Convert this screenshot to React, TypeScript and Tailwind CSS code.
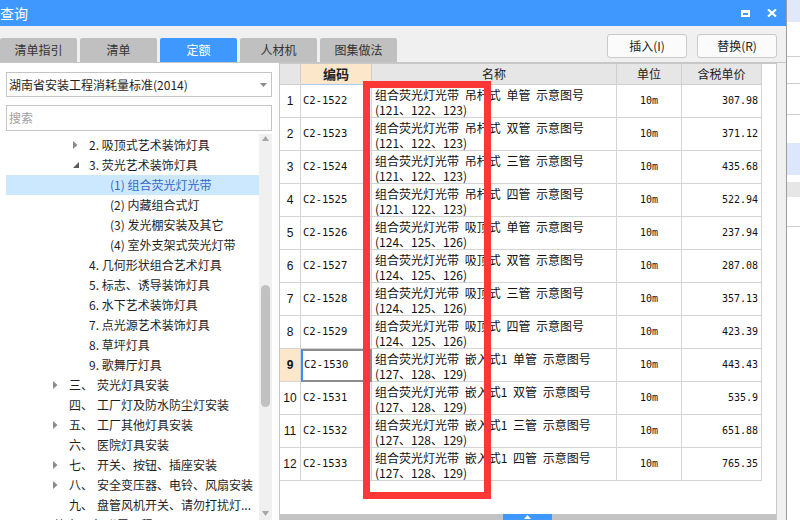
import React from 'react';

const cjk = "font-['Noto_Sans_CJK_SC',sans-serif]";
const mono = "font-['DejaVu_Sans_Mono','Noto_Sans_CJK_SC',monospace]";

type TreeRow = {
  level: 0 | 1 | 2 | 3;
  arrow?: 'c' | 'e';
  num?: string;
  text: string;
  selected?: boolean;
};

const tree: TreeRow[] = [
  { level: 2, arrow: 'c', text: '2. 吸顶式艺术装饰灯具' },
  { level: 2, arrow: 'e', text: '3. 荧光艺术装饰灯具' },
  { level: 3, text: '(1) 组合荧光灯光带', selected: true },
  { level: 3, text: '(2) 内藏组合式灯' },
  { level: 3, text: '(3) 发光棚安装及其它' },
  { level: 3, text: '(4) 室外支架式荧光灯带' },
  { level: 2, text: '4. 几何形状组合艺术灯具' },
  { level: 2, text: '5. 标志、诱导装饰灯具' },
  { level: 2, text: '6. 水下艺术装饰灯具' },
  { level: 2, text: '7. 点光源艺术装饰灯具' },
  { level: 2, text: '8. 草坪灯具' },
  { level: 2, text: '9. 歌舞厅灯具' },
  { level: 1, arrow: 'c', num: '三、', text: '荧光灯具安装' },
  { level: 1, num: '四、', text: '工厂灯及防水防尘灯安装' },
  { level: 1, arrow: 'c', num: '五、', text: '工厂其他灯具安装' },
  { level: 1, num: '六、', text: '医院灯具安装' },
  { level: 1, arrow: 'c', num: '七、', text: '开关、按钮、插座安装' },
  { level: 1, arrow: 'c', num: '八、', text: '安全变压器、电铃、风扇安装' },
  { level: 1, num: '九、', text: '盘管风机开关、请勿打扰灯...' },
];

const rows: [string, string, string, string, string][] = [
  ['C2-1522', '吊杆式', '单管', '121、122、123', '307.98'],
  ['C2-1523', '吊杆式', '双管', '121、122、123', '371.12'],
  ['C2-1524', '吊杆式', '三管', '121、122、123', '435.68'],
  ['C2-1525', '吊杆式', '四管', '121、122、123', '522.94'],
  ['C2-1526', '吸顶式', '单管', '124、125、126', '237.94'],
  ['C2-1527', '吸顶式', '双管', '124、125、126', '287.08'],
  ['C2-1528', '吸顶式', '三管', '124、125、126', '357.13'],
  ['C2-1529', '吸顶式', '四管', '124、125、126', '423.39'],
  ['C2-1530', '嵌入式1', '单管', '127、128、129', '443.43'],
  ['C2-1531', '嵌入式1', '双管', '127、128、129', '535.9'],
  ['C2-1532', '嵌入式1', '三管', '127、128、129', '651.88'],
  ['C2-1533', '嵌入式1', '四管', '127、128、129', '765.35'],
];

function Arrow({ kind }: { kind: 'c' | 'e' }) {
  if (kind === 'c') {
    return (
      <svg width="5" height="8" viewBox="0 0 5 8">
        <path d="M0 0 L4.5 4 L0 8 Z" fill="#8a8a8a" />
      </svg>
    );
  }
  return (
    <svg width="6" height="6" viewBox="0 0 6 6">
      <path d="M6 0 L6 6 L0 6 Z" fill="#5a5a5a" />
    </svg>
  );
}

function TreeItem({ r }: { r: TreeRow }) {
  const base = 'h-[20px] flex items-center whitespace-nowrap text-[12px] text-[#1e1e1e]';
  if (r.level === 3) {
    return (
      <div className={`${base} pl-[104px] ${r.selected ? 'bg-[#cce8ff] text-[#3468c8]' : ''}`}>
        {r.text}
      </div>
    );
  }
  if (r.level === 2) {
    return (
      <div className={`${base} pl-[67px]`}>
        <span className="w-[16px] flex items-center">{r.arrow && <Arrow kind={r.arrow} />}</span>
        {r.text}
      </div>
    );
  }
  if (r.level === 1) {
    return (
      <div className={`${base} pl-[47px]`}>
        <span className="w-[16px] flex items-center">{r.arrow && <Arrow kind={r.arrow} />}</span>
        <span className="w-[28px]">{r.num}</span>
        {r.text}
      </div>
    );
  }
  return <div className={`${base} pl-[44px]`}>{r.text}</div>;
}

export default function App() {
  return (
    <div className={`w-[800px] h-[520px] overflow-hidden flex bg-white ${cjk}`}>
      {/* main window */}
      <div className="w-[787px] h-full flex flex-col bg-[#f0f0f0] border-r border-[#9c9c9c] shrink-0">
        <div className="h-[26px] bg-[#3f98fe] flex items-center text-white">
          <span className="text-[14px] leading-none">查询</span>
          <div className="ml-auto flex items-center gap-[17px] mr-[9px]">
            <div className="w-[9px] h-[7px] border-2 border-white border-t-[3px]" />
            <svg width="10" height="8" viewBox="0 0 10 8">
              <path d="M1 0.5 L9 7.5 M9 0.5 L1 7.5" stroke="white" strokeWidth="2.2" />
            </svg>
          </div>
        </div>

        <div className="h-[37px] flex border-b border-[#c6c6c6]">
          <div className="flex items-end gap-[3px] text-[12px]">
            {['清单指引', '清单', '定额', '人材机', '图集做法'].map((t) => (
              <div
                key={t}
                className={`w-[77px] h-[24px] rounded-t-[2px] flex items-center justify-center ${
                  t === '定额' ? 'bg-[#3f98fe] text-white' : 'bg-[#c0c0c0] text-[#333]'
                }`}
              >
                {t}
              </div>
            ))}
          </div>
          <div className="ml-auto mr-[9px] mt-[8px] flex gap-[10px] text-[12px] text-[#222]">
            <div className="w-[80px] h-[24px] bg-[#fbfbfb] border border-[#c9c9c9] rounded-[3px] flex items-center justify-center">
              插入(I)
            </div>
            <div className="w-[80px] h-[24px] bg-[#fbfbfb] border border-[#c9c9c9] rounded-[3px] flex items-center justify-center">
              替换(R)
            </div>
          </div>
        </div>

        <div className="flex flex-1 min-h-0">
          {/* left panel */}
          <div className="w-[279px] bg-white flex flex-col pt-[9px]">
            <div className="ml-[6px] w-[266px] h-[25px] border border-[#c4c4c4] flex items-center pl-[2px] pr-[4px] text-[12px] text-[#1e1e1e]">
              <span>湖南省安装工程消耗量标准(2014)</span>
              <svg className="ml-auto" width="7" height="4" viewBox="0 0 7 4">
                <path d="M0 0 L7 0 L3.5 4 Z" fill="#8a8a8a" />
              </svg>
            </div>
            <div className="ml-[6px] mt-[8px] w-[266px] h-[26px] border border-[#c4c4c4] flex items-center pl-[2px] text-[12px] text-[#a0a0a0]">
              搜索
            </div>
            <div className="mt-[3px] flex flex-1 min-h-0">
              <div className="ml-[6px] w-[253px] pt-[1px] overflow-hidden">
                {tree.map((r, i) => (
                  <TreeItem key={i} r={r} />
                ))}
                <div className="h-[20px] pl-[48px] pt-[3px] overflow-hidden text-[12px] leading-[14px] whitespace-nowrap text-[#1e1e1e]">
                  第十三章 附属工程
                </div>
              </div>
              <div className="w-[13px] bg-[#f0f0f0] flex flex-col items-center">
                <svg className="mt-[2px]" width="7" height="5" viewBox="0 0 7 5">
                  <path d="M0 5 L7 5 L3.5 0 Z" fill="#a6a6a6" />
                </svg>
                <div className="mt-[144px] w-[9px] h-[122px] rounded-[5px] bg-[#c1c1c1]" />
                <svg className="mt-[104px]" width="7" height="5" viewBox="0 0 7 5">
                  <path d="M0 0 L7 0 L3.5 5 Z" fill="#a6a6a6" />
                </svg>
              </div>
            </div>
          </div>

          {/* right panel */}
          <div className="w-[498px] border border-[#c8c8c8] bg-white flex flex-col">
            <div className="grid grid-cols-[21px_71px_245px_65px_80px] h-[23px] text-[12px] text-[#222]">
              <div className="bg-[#e6e6e6] border-r border-b border-[#d0d0d0]" />
              <div className="bg-[#fde7cb] border-r border-b border-[#d0d0d0] border-b-[#a9c9f2] flex items-center justify-center font-bold text-[13px]">
                编码
              </div>
              <div className="bg-[#e6e6e6] border-r border-b border-[#d0d0d0] flex items-center justify-center">名称</div>
              <div className="bg-[#e6e6e6] border-r border-b border-[#d0d0d0] flex items-center justify-center">单位</div>
              <div className="bg-[#e6e6e6] border-r border-b border-[#d0d0d0] flex items-center justify-center">含税单价</div>
            </div>
            <div className="grid grid-cols-[21px_71px_245px_65px_80px] auto-rows-[33px] text-[#111]">
              {rows.map((r, i) => {
                const sel = i === 8;
                return (
                  <React.Fragment key={r[0]}>
                    <div
                      className={`border-r border-b border-[#d4d4d4] flex items-center justify-center text-[12px] font-['Liberation_Sans',sans-serif] ${
                        sel ? 'bg-[#fde7cb] font-bold' : ''
                      }`}
                    >
                      {i + 1}
                    </div>
                    <div
                      className={`flex items-center text-[10.5px] ${mono} ${
                        sel
                          ? 'border-2 border-[#8c8c8c] border-l-[#3b8cf5] pl-[1px]'
                          : 'border-r border-b border-[#d4d4d4] pl-[2px]'
                      }`}
                    >
                      {r[0]}
                    </div>
                    <div className="border-r border-b border-[#d4d4d4] pl-[3px] pt-[2px] text-[12px] leading-[15px] whitespace-pre [word-spacing:3px]">
                      {`组合荧光灯光带 ${r[1]} ${r[2]} 示意图号`}
                      <br />
                      {`(${r[3]})`}
                    </div>
                    <div className={`border-r border-b border-[#d4d4d4] flex items-center justify-center text-[10px] ${mono}`}>
                      10m
                    </div>
                    <div className={`border-r border-b border-[#d4d4d4] flex items-center justify-end pr-[3px] text-[10px] ${mono}`}>
                      {r[4]}
                    </div>
                  </React.Fragment>
                );
              })}
            </div>
            <div className="h-[33px] shrink-0" />
            <div className="h-[8px] shrink-0 flex">
              <div className="w-[223px] bg-[#c3c3c3]" />
              <div className="w-[49px] bg-[#3f98fe] flex justify-center">
                <svg className="mt-[1px]" width="7" height="4" viewBox="0 0 7 4">
                  <path d="M0 4 L7 4 L3.5 0 Z" fill="white" />
                </svg>
              </div>
              <div className="flex-1 bg-[#c3c3c3]" />
            </div>
          </div>
        </div>
      </div>

      {/* background window edge */}
      <div className="flex-1 flex flex-col bg-white">
        <div className="h-[22px] bg-[#dfe9fa]" />
        <div className="h-[35px] border-b border-[#cfcfcf]" />
        <div className="h-[27px] border-b border-[#cfcfcf]" />
        <div className="h-[31px] border-b border-[#cfcfcf]" />
        <div className="h-[28px]" />
        <div className="h-[32px] bg-[#dde7fb]" />
        <div className="h-[7px]" />
        <div className="h-[15px] bg-[#e6e6e6]" />
        <div className="h-[30px] border-b border-[#cfcfcf]" />
      </div>

      {/* red annotation box */}
      <div className="absolute left-[363px] top-[81px] w-[128px] h-[418px] border-[7px] border-[#fd3636]" />
    </div>
  );
}
